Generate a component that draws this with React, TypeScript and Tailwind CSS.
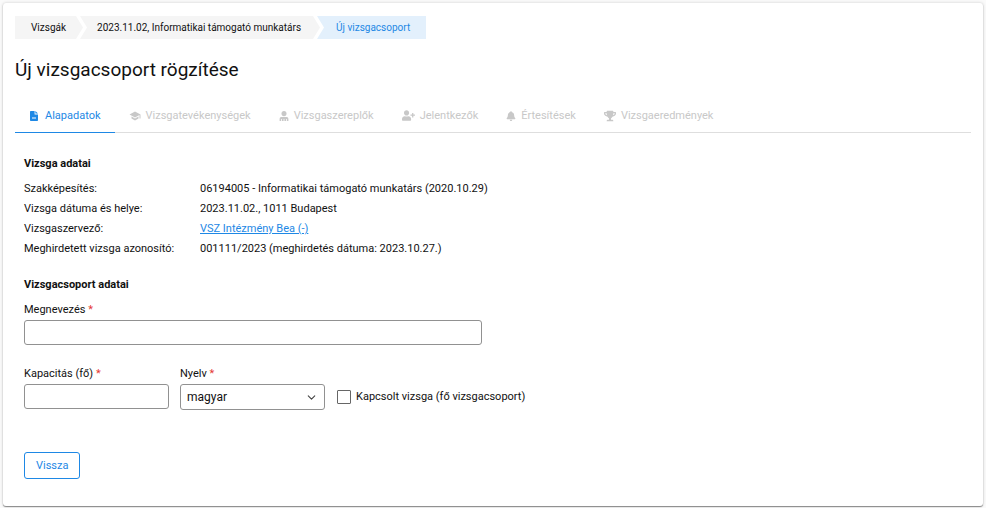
import { useState } from 'react';
import type { ReactNode } from 'react';
import { ChevronDown } from 'lucide-react';
import { FaBell, FaTrophy, FaUserPlus } from 'react-icons/fa';
import { MdSchool } from 'react-icons/md';

interface Tab {
  label: string;
  icon: ReactNode;
}

function FileIcon() {
  return (
    <svg width="11" height="10" viewBox="0 0 11 10" fill="currentColor">
      <path fillRule="evenodd" d="M1.8 0H5.6V3.4H9V9.2Q9 10 8.2 10H1.8Q1 10 1 9.2V.8Q1 0 1.8 0ZM3 6.4V7.5H7V6.4Z" />
      <path d="M6.4 0L9 2.6H6.4Z" />
    </svg>
  );
}

function ExaminerIcon() {
  return (
    <svg width="10" height="10" viewBox="0 0 10 10" fill="currentColor">
      <ellipse cx="5" cy="2.6" rx="2.5" ry="2.6" />
      <path d="M.6 10V7.8Q.6 6.2 2.2 6H7.8Q9.4 6.2 9.4 7.8V10H7.8V8H7V10H5.4V8H4.6V10H3V8H2.2V10Z" />
    </svg>
  );
}

const TABS: Tab[] = [
  { label: 'Alapadatok', icon: <FileIcon /> },
  { label: 'Vizsgatevékenységek', icon: <MdSchool size={12} /> },
  { label: 'Vizsgaszereplők', icon: <ExaminerIcon /> },
  { label: 'Jelentkezők', icon: <FaUserPlus size={13} /> },
  { label: 'Értesítések', icon: <FaBell size={10} /> },
  { label: 'Vizsgaeredmények', icon: <FaTrophy size={12} /> },
];

const DETAILS: { label: string; value: ReactNode }[] = [
  { label: 'Szakképesítés:', value: '06194005 - Informatikai támogató munkatárs (2020.10.29)' },
  { label: 'Vizsga dátuma és helye:', value: '2023.11.02., 1011 Budapest' },
  {
    label: 'Vizsgaszervező:',
    value: <a href="#szervezo" className="text-[#1e88e5] underline">VSZ Intézmény Bea (-)</a>,
  },
  { label: 'Meghirdetett vizsga azonosító:', value: '001111/2023 (meghirdetés dátuma: 2023.10.27.)' },
];

const INPUT = 'block w-full h-[25px] rounded-[3px] border border-[#919191] bg-white px-1.5 text-xs outline-none';

function Required() {
  return <span className="text-[#e53935]">*</span>;
}

function Arrow({ from, to }: { from: string; to: string }) {
  return (
    <svg width="11" height="23" viewBox="0 0 11 23" className="shrink-0">
      <path d="M0 0H11V23H0Z" className={to} />
      <path d="M0 0H4L11 11.5L4 23H0Z" fill="white" />
      <path d="M0 0L7 11.5L0 23Z" className={from} />
    </svg>
  );
}

function Breadcrumbs() {
  return (
    <nav className="flex h-[23px] text-[10px] leading-[23px]">
      <a href="#vizsgak" className="bg-[#f5f5f5] pl-4 pr-2.5">Vizsgák</a>
      <Arrow from="fill-[#f5f5f5]" to="fill-[#f5f5f5]" />
      <a href="#vizsga" className="bg-[#f5f5f5] pl-2.5 pr-3">2023.11.02, Informatikai támogató munkatárs</a>
      <Arrow from="fill-[#f5f5f5]" to="fill-[#e3f0fc]" />
      <span className="bg-[#e3f0fc] pl-3 pr-4 text-[#1e88e5]">Új vizsgacsoport</span>
    </nav>
  );
}

export default function App() {
  const [name, setName] = useState('');
  const [capacity, setCapacity] = useState('');
  const [language, setLanguage] = useState('magyar');
  const [linked, setLinked] = useState(false);

  return (
    <div className="min-h-screen bg-[#fafafa] p-[3px] font-['Roboto',sans-serif] text-[11px] leading-4 text-[#111]">
      <main className="rounded-[3px] bg-white px-3 pt-[13px] pb-[27px] shadow-[0_1px_1px_#888,0_0_3px_#ccc]">
        <Breadcrumbs />
        <h1 className="mt-[17px] text-[19px] leading-7">Új vizsgacsoport rögzítése</h1>

        <div role="tablist" className="mt-[15px] flex h-[34px] border-b border-[#dedede]">
          {TABS.map((tab, i) => (
            <button
              key={tab.label}
              role="tab"
              aria-selected={i === 0}
              disabled={i !== 0}
              className={`-mb-px flex items-center gap-[5px] border-b px-[14px] ${i === 0 ? 'border-[#1e88e5] text-[#1e88e5]' : 'border-transparent text-[#c8c8c8]'}`}
            >
              {tab.icon}
              {tab.label}
            </button>
          ))}
        </div>

        <div className="px-[9px]">
          <h2 className="mt-[23px] font-bold">Vizsga adatai</h2>
          <dl className="mt-[7px] grid grid-cols-[176px_1fr] leading-5">
            {DETAILS.map(row => (
              <div key={row.label} className="contents">
                <dt>{row.label}</dt>
                <dd>{row.value}</dd>
              </div>
            ))}
          </dl>

          <h2 className="mt-[18px] font-bold">Vizsgacsoport adatai</h2>

          {/* Form */}
          <div className="mt-[9px] max-w-[458px]">
            <label htmlFor="name" className="mb-[2px] block">Megnevezés <Required /></label>
            <input id="name" value={name} onChange={e => setName(e.target.value)} className={INPUT} />
          </div>

          <div className="mt-[21px] flex items-start gap-[11px]">
            <div className="w-[145px]">
              <label htmlFor="capacity" className="mb-[2px] block">Kapacitás (fő) <Required /></label>
              <input id="capacity" value={capacity} onChange={e => setCapacity(e.target.value)} className={INPUT} />
            </div>
            <div className="w-[145px]">
              <label htmlFor="language" className="mb-[2px] block">Nyelv <Required /></label>
              <div className="relative">
                <select
                  id="language"
                  value={language}
                  onChange={e => setLanguage(e.target.value)}
                  className="block h-[26px] w-full appearance-none rounded-[3px] border border-[#919191] bg-white px-1.5 text-xs outline-none"
                >
                  <option>magyar</option>
                  <option>angol</option>
                  <option>német</option>
                </select>
                <ChevronDown size={13} className="pointer-events-none absolute top-[7px] right-[7px] text-[#444]" />
              </div>
            </div>
            <label className="mt-[23px] flex items-center gap-[5px]">
              <input
                type="checkbox"
                checked={linked}
                onChange={e => setLinked(e.target.checked)}
                className="ml-px size-[14px] appearance-none rounded-[1px] border border-[#666] checked:bg-[#1e88e5]"
              />
              Kapcsolt vizsga (fő vizsgacsoport)
            </label>
          </div>

          <button className="mt-[42px] h-[27px] rounded-[3px] border border-[#1e88e5] px-[11px] text-[#1e88e5]">
            Vissza
          </button>
        </div>
      </main>
    </div>
  );
}
